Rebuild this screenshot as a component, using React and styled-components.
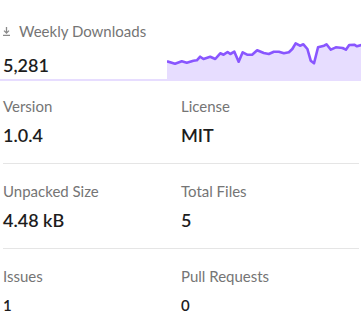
import React from 'react';
import styled, { createGlobalStyle } from 'styled-components';

const Global = createGlobalStyle`
  body {
    margin: 0;
    background: #fff;
    font-family: 'Lato', 'Liberation Sans', sans-serif;
  }
`;

const Sidebar = styled.div`
  width: 356px;
  padding: 20px 0 0 3px;
`;

const DownloadsRow = styled.div`
  display: flex;
  align-items: flex-end;
  margin-left: -3px;
  margin-right: -8px;
`;

const DownloadsInfo = styled.div`
  width: 164px;
  padding-left: 3px;
  border-bottom: 2px solid #e7ddff;
`;

const Label = styled.h3`
  margin: 0;
  font-size: 15px;
  font-weight: 400;
  color: #757575;
  line-height: 22px;
  display: flex;
  align-items: center;
  gap: 9px;
`;

const Count = styled.p`
  margin: 0;
  padding: 10px 0 1px;
  font-size: 18px;
  font-weight: 600;
  color: #1d1d1d;
  line-height: 26px;
`;

const Chart = styled.svg`
  display: block;
  flex: 1;
  height: 42px;
`;

const Grid = styled.div`
  display: grid;
  grid-template-columns: 1fr 1fr;
`;

const Cell = styled.div`
  padding: ${(p) => (p.first ? '14px' : '16px')} 0 ${(p) => (p.last ? '12px' : '15px')};
  border-bottom: ${(p) => (p.last ? 'none' : '1px solid #e5e5e5')};
`;

const Value = styled.p`
  margin: 0;
  padding-top: 5px;
  font-size: ${(p) => (p.small ? '15px' : '18px')};
  font-weight: 600;
  color: #1d1d1d;
  line-height: 26px;
`;

const pts = [
  [0, 22.3], [8, 24.7], [14.7, 22.3], [19.7, 23.7], [26.3, 21.7], [29.7, 21.3],
  [33, 17.7], [36.3, 20], [43, 17.7], [48, 20], [53, 14.3], [56.3, 15.7],
  [60.3, 13], [63, 15], [67, 12.7], [71.3, 22.7], [75.3, 13.3], [79.7, 15.7],
  [84.7, 15.7], [89.7, 11.3], [96.3, 14], [101.3, 15], [106.3, 12.7], [111.3, 12.7],
  [116.3, 14.3], [121.3, 13.3], [124.7, 10], [128, 4.3], [132.3, 6.7], [135.7, 5.3],
  [139.7, 10], [143, 21.7], [146.3, 24.3], [150.3, 8.3], [156.3, 6.7], [158.7, 5.3],
  [163, 10.7], [168, 8.3], [174.7, 9], [178, 10.7], [181.3, 6], [186.3, 5.7],
  [189, 7.3], [194, 5.7], [199, 6],
];

const line = pts.map((p, i) => `${i ? 'L' : 'M'}${p[0]} ${p[1]}`).join(' ');
const area = `${line} L199 42 L0 42 Z`;

const DownloadIcon = () => (
  <svg width="7" height="9" viewBox="0 0 7 9" fill="none" stroke="#8a8a8a" strokeWidth="1.3">
    <path d="M3.5 0 V6 M1 3.6 L3.5 6.1 L6 3.6 M0 8.3 H7" />
  </svg>
);

const stats = [
  [
    { label: 'Version', value: '1.0.4' },
    { label: 'License', value: 'MIT' },
  ],
  [
    { label: 'Unpacked Size', value: '4.48 kB' },
    { label: 'Total Files', value: '5' },
  ],
  [
    { label: 'Issues', value: '1', small: true },
    { label: 'Pull Requests', value: '0', small: true },
  ],
];

export default function App() {
  return (
    <>
      <Global />
      <Sidebar>
        <DownloadsRow>
          <DownloadsInfo>
            <Label>
              <DownloadIcon />
              Weekly Downloads
            </Label>
            <Count>5,281</Count>
          </DownloadsInfo>
          <Chart viewBox="0 0 199 42" preserveAspectRatio="none">
            <path d={area} fill="#e7ddff" />
            <path d={line} fill="none" stroke="#8956ff" strokeWidth="2.6" strokeLinejoin="round" />
          </Chart>
        </DownloadsRow>
        <Grid>
          {stats.map((row, r) =>
            row.map((s) => (
              <Cell key={s.label} first={r === 0} last={r === stats.length - 1}>
                <Label>{s.label}</Label>
                <Value small={s.small}>{s.value}</Value>
              </Cell>
            ))
          )}
        </Grid>
      </Sidebar>
    </>
  );
}
